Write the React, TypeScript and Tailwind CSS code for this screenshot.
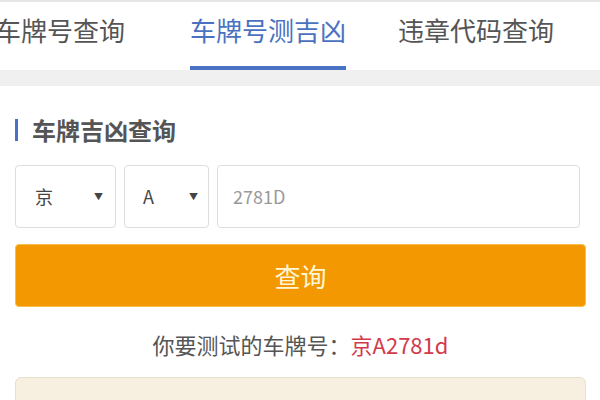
import React from "react";

const font = { fontFamily: '"Noto Sans CJK SC", "Noto Sans", sans-serif' };

function Caret() {
  return <span className="text-[9px] text-[#444]">▼</span>;
}

export default function App() {
  return (
    <div className="w-[600px] h-[400px] overflow-hidden bg-white" style={font}>
      {/* Tabs */}
      <div className="h-[2px] bg-[#e6e6e6]" />
      <div className="flex ml-[-44px] h-[68px] bg-white">
        <div className="w-[208px] flex justify-center pt-[8px]">
          <span className="text-[26px] leading-[40px] text-[#555]">车牌号查询</span>
        </div>
        <div className="w-[208px] flex justify-center pt-[8px]">
          <div className="flex flex-col items-stretch">
            <span className="text-[26px] leading-[40px] text-[#4a72c0]">车牌号测吉凶</span>
            <div className="mt-[16px] h-[4px] bg-[#4a72c4]" />
          </div>
        </div>
        <div className="w-[208px] flex justify-center pt-[8px]">
          <span className="text-[26px] leading-[40px] text-[#555]">违章代码查询</span>
        </div>
      </div>
      <div className="h-[16px] bg-[#f0f0f0]" />

      {/* Content */}
      <div className="px-[15px] pr-[14px]">
        <div className="flex items-center gap-[14px] mt-[31px] h-[26px]">
          <div className="w-[3px] h-[22px] bg-[#4a72c4]" />
          <span className="text-[24px] font-bold text-[#555] leading-none">车牌吉凶查询</span>
        </div>

        <div className="flex gap-[8px] mt-[22px] h-[63px]">
          <div className="w-[101px] border border-[#ddd] rounded-[4px] flex items-center justify-between pl-[19px] pr-[12px]">
            <span className="text-[18px] text-[#444]">京</span>
            <Caret />
          </div>
          <div className="w-[85px] border border-[#ddd] rounded-[4px] flex items-center justify-between pl-[18px] pr-[10px]">
            <span className="text-[18px] text-[#444]">A</span>
            <Caret />
          </div>
          <div className="flex-1 mr-[6px] border border-[#ddd] rounded-[4px] flex items-center pl-[15px]">
            <span className="text-[18px] text-[#999]">2781D</span>
          </div>
        </div>

        <button className="mt-[16px] w-full h-[63px] bg-[#f39800] border border-[#f6c04a] rounded-[4px] flex items-center justify-center">
          <span className="text-[26px] text-[#fff6d6]">查询</span>
        </button>

        <div className="mt-[21px] text-center text-[22px] leading-[32px] text-[#555]">
          你要测试的车牌号：<span className="text-[#d23a4c]">京A2781d</span>
        </div>

        <div className="mt-[17px] h-[60px] bg-[#f7efe0] border border-[#e9dfcc] rounded-[6px]" />
      </div>
    </div>
  );
}
